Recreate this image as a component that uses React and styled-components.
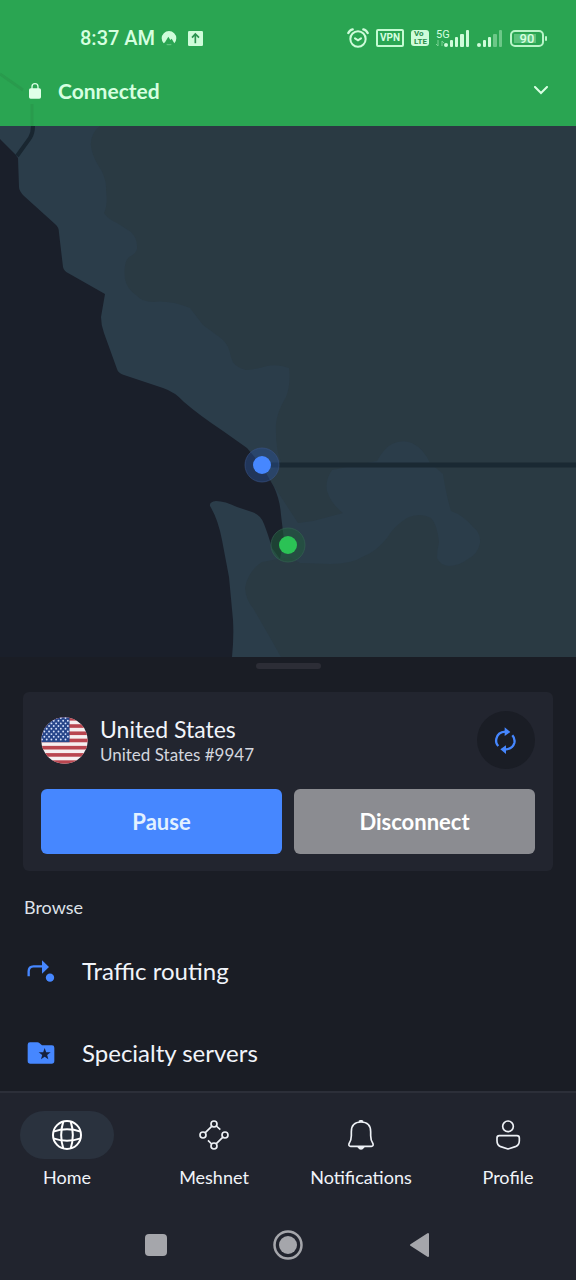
import React from "react";
import styled, { createGlobalStyle } from "styled-components";

const GlobalStyle = createGlobalStyle`
  *, *::before, *::after { box-sizing: border-box; }
  body {
    margin: 0;
    background: #1a1d25;
    color: #f1f4fa;
    font-family: Lato, "Noto Sans", sans-serif;
  }
  button { font: inherit; color: inherit; border: 0; padding: 0; background: none; cursor: pointer; }
  a { color: inherit; text-decoration: none; }
  svg { display: block; flex: none; }
`;

const Screen = styled.div`
  min-height: 100vh;
  display: flex;
  flex-direction: column;
`;

const Header = styled.header`
  position: relative;
  background: #2aa552;
  color: #d6ffe0;
  padding: 16px 0 4px;
`;

const BorderTrace = styled.svg`
  position: absolute;
  left: 0;
  bottom: 0;
`;

const StatusBar = styled.div`
  position: relative;
  height: 44px;
  padding: 0 32px 0 80px;
  display: flex;
  align-items: center;
  justify-content: space-between;
  font-family: Roboto, sans-serif;
`;

const StatusGroup = styled.div`
  display: flex;
  align-items: center;
  gap: ${(p) => p.$gap}px;
`;

const Clock = styled.span`
  font-size: 20px;
  line-height: 24px;
  font-weight: 500;
  white-space: nowrap;
`;

const VpnBadge = styled.span`
  width: 28px;
  height: 18px;
  border: 2px solid #c4fbd2;
  border-radius: 2px;
  display: flex;
  align-items: center;
  justify-content: center;
  font-size: 10px;
  line-height: 14px;
  font-weight: 700;
`;

const LteBadge = styled.span`
  width: 18px;
  height: 16px;
  border-radius: 3px;
  background: #cffcda;
  color: #2a8d4b;
  padding-left: 3px;
  font-size: 8px;
  line-height: 8px;
  font-weight: 700;
`;

const Signal = styled.span`
  display: flex;
  align-items: flex-end;
`;

const Network = styled.span`
  display: flex;
  flex-direction: column;
  width: 8px;
  font-size: 11px;
  line-height: 11px;
  white-space: nowrap;
`;

const Battery = styled.span`
  position: relative;
  width: 34px;
  height: 17px;
  border: 2px solid #b9f5c8;
  border-radius: 5px;
  display: flex;
  align-items: center;
  justify-content: center;
  font-size: 13px;
  line-height: 13px;
  font-weight: 500;
  background: linear-gradient(#5cc27c, #5cc27c) 2px 2px / 22px 9px no-repeat;

  &::after {
    content: "";
    position: absolute;
    right: -5px;
    top: 4px;
    width: 2px;
    height: 5px;
    border-radius: 1px;
    background: #b9f5c8;
  }
`;

const ConnectionBar = styled.button`
  position: relative;
  width: 100%;
  height: 62px;
  padding: 0 27px;
  display: flex;
  align-items: center;
  text-align: left;
`;

const ConnectionLabel = styled.span`
  flex: 1;
  padding-left: 15px;
  font-size: 21px;
  line-height: 26px;
  font-weight: 700;
`;

const MapArea = styled.main`
  flex: 1 0 531px;
  display: flex;
  background: #2a3a43;
  overflow: hidden;

  svg { flex: 1; width: 100%; height: auto; }
`;

const Sheet = styled.section`
  padding: 6px 23px 0;
`;

const Handle = styled.div`
  width: 65px;
  height: 6px;
  margin: 0 auto 23px;
  border-radius: 3px;
  background: #2c2d36;
`;

const Card = styled.div`
  padding: 19px 18px 17px;
  border-radius: 6px;
  background: #22252f;
  display: flex;
  flex-direction: column;
  gap: 20px;
`;

const ServerRow = styled.div`
  display: flex;
  align-items: center;
  gap: 12px;
`;

const ServerText = styled.div`
  flex: 1;
  padding-top: 2px;
`;

const Country = styled.h1`
  margin: 0;
  font-size: 23px;
  line-height: 28px;
  font-weight: 400;
`;

const ServerName = styled.p`
  margin: 0;
  font-size: 17px;
  line-height: 24px;
  color: #d3d6de;
`;

const RefreshButton = styled.button`
  width: 58px;
  height: 58px;
  border-radius: 50%;
  background: #1a1d25;
  display: flex;
  align-items: center;
  justify-content: center;
`;

const ActionRow = styled.div`
  display: flex;
  gap: 12px;
`;

const ActionButton = styled.button`
  && {
    flex: 1;
    height: 65px;
    border-radius: 6px;
    background: ${(p) => (p.$primary ? "#4687ff" : "#8b8c91")};
    color: ${(p) => (p.$primary ? "#e2f1ff" : "#ffffff")};
    font-size: 22px;
    line-height: 28px;
    font-weight: 700;
  }
`;

const SectionTitle = styled.h2`
  margin: 0;
  padding: 24px 1px 14px;
  font-size: 18px;
  line-height: 24px;
  font-weight: 400;
  color: #dfe2e9;
`;

const BrowseList = styled.nav`
  display: flex;
  flex-direction: column;
  gap: 6px;
`;

const BrowseLink = styled.a`
  height: 76px;
  padding-left: 4px;
  display: flex;
  align-items: center;
  gap: 27px;
  font-size: 24px;
  line-height: 28px;
`;

const BottomArea = styled.footer`
  background: #21242e;
  border-top: 2px solid #2c2f39;
`;

const TabBar = styled.nav`
  padding: 18px 21px 21px 20px;
  display: flex;
  justify-content: space-between;
`;

const Tab = styled.a`
  width: 94px;
  display: flex;
  flex-direction: column;
  align-items: center;
  gap: 6px;
  font-size: 18px;
  line-height: 24px;
  white-space: nowrap;
`;

const TabIcon = styled.span`
  width: 100%;
  height: 48px;
  border-radius: 24px;
  background: ${(p) => (p.$active ? "#2a323e" : "transparent")};
  display: flex;
  align-items: center;
  justify-content: center;
`;

const SystemBar = styled.div`
  height: 70px;
  display: flex;
  justify-content: center;
  gap: 84px;
`;

const SystemButton = styled.button`
  width: 48px;
  display: flex;
  align-items: center;
  justify-content: center;
`;

function RegionMap() {
  return (
    <svg viewBox="0 126 576 531" preserveAspectRatio="xMidYMid slice" role="img" aria-label="Map">
      <rect y="126" width="576" height="531" fill="#2a3a43" />
      <g fill="#2b3d4a">
        <path d="M0 126H100Q90 134 91 146Q92 155 98 165Q107 178 106 190Q108 205 104 213Q108 219 117 223L131 232Q138 239 137 249Q136 254 129 257Q123 263 125 279Q127 289 136 295Q142 302 153 302Q170 300 190 308L203 325L222 339Q229 345 231 357Q233 367 246 370Q258 369 267 366Q278 364 289 368Q291 384 286 397Q277 412 276 424Q275 450 282 465L250 480L0 450Z" />
        <path d="M270 480L283 500L298 523L313 521L343 513Q331 504 327 491Q325 480 332 470L377 461Q384 448 392 444Q402 439 412 443Q424 449 430 463L443 474Q446 494 451 511Q463 515 473 527Q481 533 480 543Q478 554 468 559Q459 566 449 566Q440 565 437 558Q437 550 439 542Q437 524 431 518Q420 512 407 518Q394 526 387 538Q376 552 362 557Q352 564 330 564L300 563L290 557L262 562Q248 571 245 588Q246 600 253 608L268 634L281 657H200V490Z" />
      </g>
      <path
        fill="#1a1f2a"
        d="M0 139L15 154L18 158L19 187Q19 191 24 196L55 224Q59 227 59 233L63 267Q64 271 68 273L105 294L101 317Q101 325 104 333L117 369Q118 373 124 375L163 388Q175 392 184 402Q199 415 223 431L247 448L262 466L274 487Q280 500 281 515L284 540L280 559L272 548Q268 534 264 524Q261 515 252 512L237 507Q225 501 216 501Q209 502 210 506Q218 519 222 540L229 577L233 620Q234 638 232 657H0Z"
      />
      <path d="M17 156L30 138Q33 133 33 126" fill="none" stroke="#192630" strokeWidth="4" />
      <path d="M262 465H576" stroke="#1a2933" strokeWidth="5" />
      <circle cx="262" cy="465" r="17" fill="#2b5296" fillOpacity="0.45" stroke="#3a5485" strokeOpacity="0.6" />
      <circle cx="262" cy="465" r="9" fill="#4687ff" />
      <circle cx="288" cy="545" r="17" fill="#205c3c" fillOpacity="0.55" stroke="#366454" strokeOpacity="0.6" />
      <circle cx="288" cy="545" r="9" fill="#2bc255" />
    </svg>
  );
}

function SignalBars({ strong }) {
  return (
    <svg width="26" height="17" viewBox="0 0 26 17" fill="#cffcda">
      <rect x="0" y="13" width="4" height="4" rx="2" />
      <rect x="6" y="10" width="3" height="7" rx="1" />
      <rect x="11" y="7" width="3" height="10" rx="1" />
      <rect x="16" y="4" width="4" height="13" rx="1" opacity={strong ? 1 : 0.4} />
      <rect x="22" y="0" width="3" height="17" rx="1" opacity={strong ? 1 : 0.4} />
    </svg>
  );
}

function AlarmIcon() {
  return (
    <svg width="22" height="20" viewBox="0 0 66 60" fill="none" stroke="#cffcda" strokeWidth="6" strokeLinecap="round">
      <circle cx="33" cy="33" r="23" />
      <path d="M4 15Q8 6 17 4M62 15Q58 6 49 4" strokeWidth="7" />
      <path d="M24 31L33 37L42 31" />
    </svg>
  );
}

function MountainIcon() {
  return (
    <svg width="16" height="16" viewBox="0 0 48 48">
      <path fill="#cffcda" d="M8 40Q2 33 2 25A22 22 0 0 1 46 25Q46 33 40 40L32 26L28 30L22 20L12 37Z" />
      <path d="M17 43Q24 45 31 43" stroke="#5cc27c" strokeWidth="4" fill="none" />
    </svg>
  );
}

function UploadIcon() {
  return (
    <svg width="15" height="15" viewBox="0 0 45 45">
      <rect width="45" height="45" rx="4" fill="#cffcda" />
      <path d="M22 37V10M12 20L22 9L33 20" fill="none" stroke="#2a9450" strokeWidth="5" />
    </svg>
  );
}

function LockIcon() {
  return (
    <svg width="16" height="18" viewBox="0 0 48 54">
      <path d="M15 24V14Q15 5 24 5T33 14V24" fill="none" stroke="#d9ffe3" strokeWidth="4" />
      <rect x="6" y="19" width="36" height="31" rx="5" fill="#e0ffe8" />
    </svg>
  );
}

function FlagIcon() {
  const stripes = [0, 1, 2, 3, 4, 5, 6];
  const stars = [];
  for (let row = 0; row < 9; row += 1) {
    for (let col = 0; col < 6; col += 1) {
      stars.push([(row % 2 ? 7 : 0) + col * 14 + 3, row * 8 + 3]);
    }
  }
  return (
    <svg width="47" height="47" viewBox="0 0 140 140" role="img" aria-label="United States flag">
      <clipPath id="flag-circle"><circle cx="70" cy="70" r="69" /></clipPath>
      <g clipPath="url(#flag-circle)">
        <rect width="140" height="140" fill="#f6eff0" />
        {stripes.map((i) => <rect key={i} y={i * 21.5} width="140" height="10.8" fill="#b9454f" />)}
        <rect width="85" height="75" fill="#27468a" />
        {stars.filter(([x]) => x < 84).map(([x, y]) => (
          <circle key={`${x}-${y}`} cx={x} cy={y} r="2.8" fill="#d5e0fa" />
        ))}
      </g>
    </svg>
  );
}

function RefreshIcon() {
  return (
    <svg width="24" height="28" viewBox="618 139 72 84" fill="none" stroke="#4687ff" strokeWidth="7">
      <path d="M631 199Q622 190 625 177Q629 158 652 156" />
      <path d="M673 167Q682 177 679 190Q674 208 650 210" />
      <path d="M650 143L667 157L650 169ZM654 197L637 209L654 223Z" fill="#4687ff" stroke="none" />
    </svg>
  );
}

function RouteIcon() {
  return (
    <svg width="28" height="24" viewBox="82 241 84 72" fill="#4687ff">
      <path d="M87 293V278Q87 263 102 263H130" fill="none" stroke="#4687ff" strokeWidth="7" />
      <path d="M127 245L148 265L127 285Z" />
      <circle cx="151" cy="297" r="12.5" />
    </svg>
  );
}

function FolderIcon() {
  return (
    <svg width="28" height="24" viewBox="82 485 84 72">
      <path fill="#4687ff" d="M84 496Q84 489 91 489H113Q117 489 120 492L127 498H157Q164 498 164 505V545Q164 553 156 553H92Q84 553 84 545Z" />
      <path fill="#16213d" d="M135 506L139.500 518.500L153 519L142.500 527L146 540L135 532.500L124 540L127.500 527L117 519L130.500 518.500Z" />
    </svg>
  );
}

function GlobeIcon() {
  return (
    <svg width="30" height="30" viewBox="156 103 90 90" fill="none" stroke="#fff" strokeWidth="6">
      <circle cx="201" cy="148" r="42" />
      <path d="M190 107Q177 148 190 189M212 107Q225 148 212 189" />
      <path d="M160 138Q201 124 242 138M160 158Q201 172 242 158" />
    </svg>
  );
}

function MeshIcon() {
  return (
    <svg width="30" height="30" viewBox="596 103 90 90" fill="none" stroke="#eef1f6" strokeWidth="5">
      <circle cx="641" cy="115" r="9" />
      <circle cx="674" cy="148" r="9" />
      <circle cx="641" cy="181" r="9" />
      <circle cx="608" cy="148" r="9" />
      <path d="M615 141L634 122M648 121L660 132M667 155L648 174M634 175L623 164" />
    </svg>
  );
}

function BellIcon() {
  return (
    <svg width="30" height="30" viewBox="174 103 90 90" fill="none" stroke="#eef1f6" strokeWidth="5" strokeLinejoin="round">
      <path d="M190 150V138Q190 109 219 109T248 138V150Q248 164 255 174Q257 182 250 182H188Q181 182 183 174Q190 164 190 150Z" />
      <path d="M213 108Q219 102 225 108M211 184Q219 196 227 184Z" fill="#eef1f6" />
    </svg>
  );
}

function ProfileIcon() {
  return (
    <svg width="30" height="30" viewBox="615 103 90 90" fill="none" stroke="#eef1f6" strokeWidth="5" strokeLinejoin="round">
      <circle cx="660" cy="122" r="16" />
      <path d="M634 150H687Q694 150 694 157V165Q694 178 682 183L660 190L638 183Q627 178 627 165V157Q627 150 634 150Z" />
    </svg>
  );
}

const tabs = [
  { label: "Home", Icon: GlobeIcon, active: true },
  { label: "Meshnet", Icon: MeshIcon },
  { label: "Notifications", Icon: BellIcon },
  { label: "Profile", Icon: ProfileIcon },
];

export default function App() {
  return (
    <Screen>
      <GlobalStyle />
      <Header>
        <BorderTrace width="40" height="56" viewBox="0 0 40 56" fill="none" stroke="#299b4d" strokeWidth="3" aria-hidden="true">
          <path d="M0 4L23 20M32 34V56" />
        </BorderTrace>
        <StatusBar>
          <StatusGroup $gap={6}>
            <Clock>8:37 AM</Clock>
            <StatusGroup $gap={11}>
              <MountainIcon />
              <UploadIcon />
            </StatusGroup>
          </StatusGroup>
          <StatusGroup $gap={7}>
            <AlarmIcon />
            <VpnBadge>VPN</VpnBadge>
            <LteBadge>Vo<br />LTE</LteBadge>
            <Signal>
              <Network>
                5G
                <svg width="8" height="7" viewBox="0 0 8 7" fill="none" stroke="#7bd494">
                  <path d="M2 0V6M0 4L2 6M6 6V1M8 3L6 1" />
                </svg>
              </Network>
              <SignalBars strong />
            </Signal>
            <SignalBars />
            <Battery>90</Battery>
          </StatusGroup>
        </StatusBar>
        <ConnectionBar type="button">
          <LockIcon />
          <ConnectionLabel>Connected</ConnectionLabel>
          <svg width="16" height="10" viewBox="0 0 16 10" fill="none" stroke="#d9ffe3" strokeWidth="2" strokeLinecap="round">
            <path d="M2 1L8 7L14 1" />
          </svg>
        </ConnectionBar>
      </Header>

      <MapArea>
        <RegionMap />
      </MapArea>

      <Sheet>
        <Handle />
        <Card>
          <ServerRow>
            <FlagIcon />
            <ServerText>
              <Country>United States</Country>
              <ServerName>United States #9947</ServerName>
            </ServerText>
            <RefreshButton type="button" aria-label="Reconnect">
              <RefreshIcon />
            </RefreshButton>
          </ServerRow>
          <ActionRow>
            <ActionButton type="button" $primary>Pause</ActionButton>
            <ActionButton type="button">Disconnect</ActionButton>
          </ActionRow>
        </Card>
        <SectionTitle>Browse</SectionTitle>
        <BrowseList>
          <BrowseLink href="#routing"><RouteIcon />Traffic routing</BrowseLink>
          <BrowseLink href="#specialty"><FolderIcon />Specialty servers</BrowseLink>
        </BrowseList>
      </Sheet>

      <BottomArea>
        <TabBar>
          {tabs.map(({ label, Icon, active }) => (
            <Tab key={label} href={`#${label.toLowerCase()}`}>
              <TabIcon $active={active}><Icon /></TabIcon>
              {label}
            </Tab>
          ))}
        </TabBar>
        <SystemBar>
          <SystemButton type="button" aria-label="Recent apps">
            <svg width="22" height="22"><rect width="22" height="22" rx="4" fill="#a5a6ab" /></svg>
          </SystemButton>
          <SystemButton type="button" aria-label="Home screen">
            <svg width="30" height="30" viewBox="0 0 30 30">
              <circle cx="15" cy="15" r="13.500" fill="none" stroke="#a5a6ab" strokeWidth="2.500" />
              <circle cx="15" cy="15" r="9" fill="#a5a6ab" />
            </svg>
          </SystemButton>
          <SystemButton type="button" aria-label="Back">
            <svg width="22" height="26" viewBox="0 0 22 26">
              <path d="M2 13L19 2V24Z" fill="#a5a6ab" stroke="#a5a6ab" strokeWidth="2" strokeLinejoin="round" />
            </svg>
          </SystemButton>
        </SystemBar>
      </BottomArea>
    </Screen>
  );
}
